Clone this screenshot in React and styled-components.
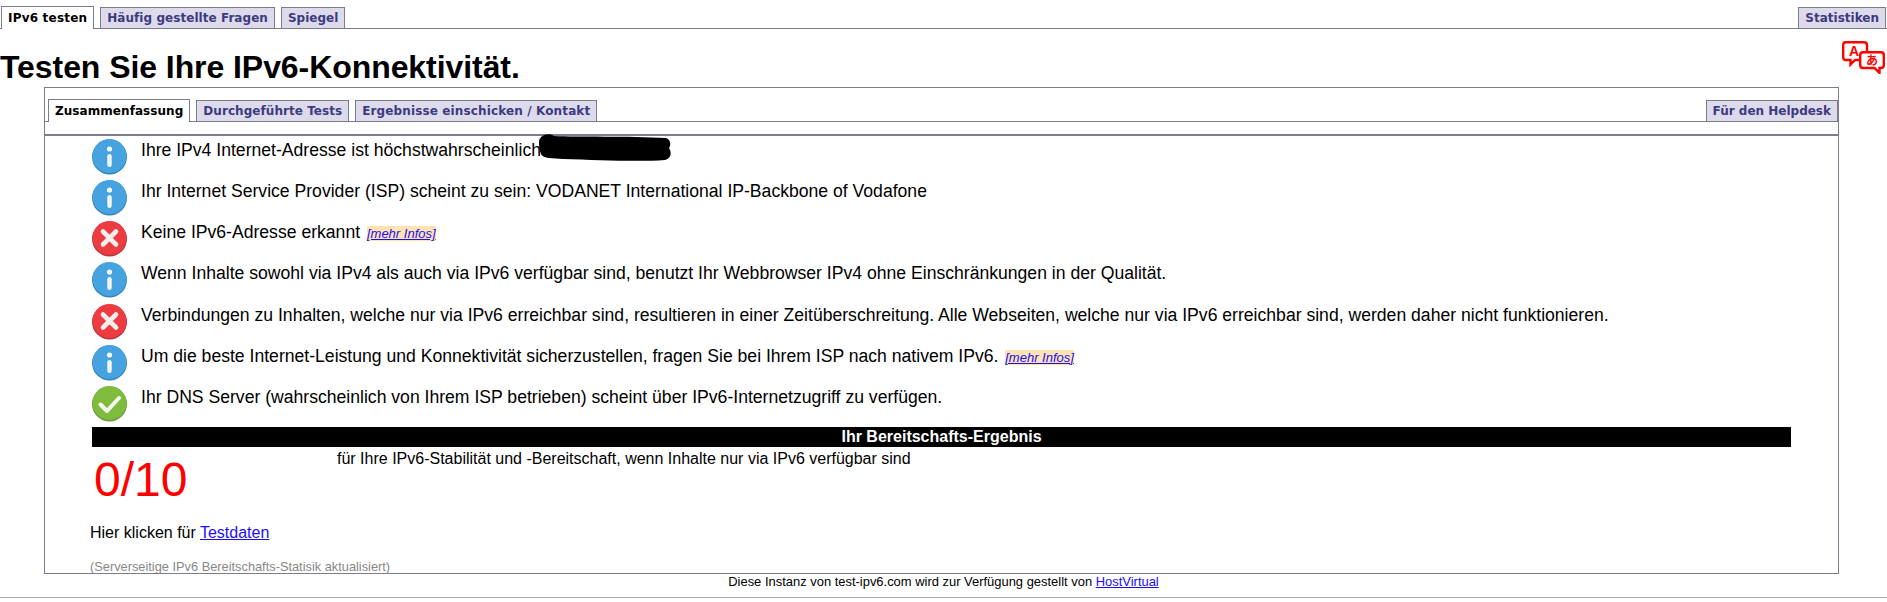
import React from "react";
import styled, { createGlobalStyle } from "styled-components";

const Global = createGlobalStyle`
  html, body { margin: 0; padding: 0; background: #fff; }
  body { font-family: "Liberation Sans", Arial, sans-serif; color: #000; font-size: 16px; }
`;
const Page = styled.div`width: 1887px; height: 602px; overflow: hidden; position: relative;`;
const TabBar = styled.div`
  display: flex; align-items: flex-end; gap: ${p => p.$gap || 6}px;
  height: ${p => p.$height}px; padding: 0 ${p => p.$padRight || 0}px 0 ${p => p.$padLeft || 0}px;
  border-bottom: 1px solid #7d7b8e; box-sizing: content-box;
`;
const Spacer = styled.div`flex: 1;`;
const Tab = styled.div`
  height: 21px; box-sizing: border-box; padding: 0 6px;
  display: flex; align-items: center;
  font: bold 12px "DejaVu Sans", Verdana, sans-serif;
  letter-spacing: ${p => p.$track || 0}px;
  border: 1px solid #7d7b8e;
  color: ${p => p.$active ? "#000" : "#3d3a80"};
  background: ${p => p.$active ? "#fff" : "#dddbeb"};
  ${p => p.$active ? "height: 23px; margin-bottom: -1px; border-bottom: 0; padding-bottom: 1px;" : "border-bottom: 0;"}
`;
const HeadRow = styled.div`position: relative; height: 58px;`;
const Title = styled.h1`
  margin: 0; padding-top: 22px; font: bold 32px/32px "Liberation Sans", Arial, sans-serif;
  letter-spacing: -0.07px; white-space: nowrap;
`;
const Lang = styled.svg`position: absolute; left: 1842px; top: 12px;`;
const Box = styled.div`
  margin-left: 44px; width: 1795px; height: 487px; box-sizing: border-box;
  border: 1px solid #7d7b8e;
`;
const Rule = styled.div`height: 12px; border-bottom: 2px solid #7d7b8e;`;
const Content = styled.div`padding: 3px 0 0 47px;`;
const Row = styled.div`display: flex; height: 41.17px; gap: 14px; align-items: flex-start;`;
const Msg = styled.div`font-size: 17.6px; line-height: 20px; padding-top: 1px; white-space: nowrap; position: relative;`;
const More = styled.a`
  font: italic 13px "Liberation Sans", Arial, sans-serif; color: #1a0dff; text-decoration: underline;
  background: #fde3b0; margin-left: 2px;
`;
const Scribble = styled.svg`position: absolute; left: 397px; top: -6px;`;
const Banner = styled.div`
  margin-top: 0; width: 1699px; height: 20px; background: #000; color: #fff;
  font: bold 16px/20px "Liberation Sans", Arial, sans-serif; text-align: center;
`;
const ScoreRow = styled.div`display: flex; height: 75px;`;
const Score = styled.div`width: 245px; padding: 5px 0 0 2px; box-sizing: border-box; font-size: 48px; line-height: 55px; color: #f00;`;
const ScoreNote = styled.div`font-size: 16px; line-height: 18px; padding-top: 3px;`;
const DataLine = styled.div`margin: 0 0 0 -2px; font-size: 16px; line-height: 18px; height: 34px; padding-top: 2px;`;
const Link = styled.a`color: #1a0dff; text-decoration: underline;`;
const Small = styled.div`margin-left: -2px; font-size: 12.8px; line-height: 14px; color: #888; padding-top: 2px;`;
const Footer = styled.div`
  height: 23px; border-bottom: 1px solid #aaa; text-align: center;
  font-size: 12.95px; line-height: 16px;
`;

const Icon = ({ kind }) => {
  const fill = { info: "#46a3e0", err: "#ec3c42", ok: "#7fbb3c" }[kind];
  const dark = { info: "#3585ba", err: "#b9353a", ok: "#69993a" }[kind];
  return (
    <svg width="35" height="36" viewBox="0 0 35 36" style={{ flex: "none" }}>
      <circle cx="17.5" cy="18" r="17.5" fill={dark} />
      <circle cx="17.5" cy="17" r="17" fill={fill} />
      {kind === "info" && <g fill="#f3f8fc"><circle cx="17.5" cy="10" r="2.6" /><rect x="15.3" y="15" width="4.4" height="13" rx="2.2" /></g>}
      {kind === "err" && <path d="M11 10.5 L24 23.5 M24 10.5 L11 23.5" stroke="#f8eeee" strokeWidth="4.6" strokeLinecap="round" />}
      {kind === "ok" && <path d="M8.5 18.5 L15 25 L27 12" fill="none" stroke="#f5f9ee" strokeWidth="4" strokeLinecap="round" strokeLinejoin="round" />}
    </svg>
  );
};

export default function App() {
  return (
    <Page>
      <Global />
      <TabBar $height={28} $padLeft={1} $padRight={1}>
        <Tab $active $track={0.2}>IPv6 testen</Tab>
        <Tab $track={0.05}>Häufig gestellte Fragen</Tab>
        <Tab>Spiegel</Tab>
        <Spacer />
        <Tab>Statistiken</Tab>
      </TabBar>
      <HeadRow>
        <Title>Testen Sie Ihre IPv6-Konnektivität.</Title>
        <Lang width="43" height="33" viewBox="0 0 43 33" fill="none">
          <path d="M3.5 1.2 H22 Q25 1.2 25 4 V16 Q25 19 22 19 H13 L8.5 23.5 V19 H3.5 Q1.2 19 1.2 16 V4 Q1.2 1.2 3.5 1.2 Z" fill="#fff" stroke="#f00" strokeWidth="2.4" />
          <text x="7" y="15" fontFamily="Liberation Sans" fontWeight="bold" fontSize="14" fill="#f00">A</text>
          <path d="M21 11.2 H39 Q41.8 11.2 41.8 14 V24 Q41.8 27 39 27 H37.5 V32 L32.5 27 H21 Q18.2 27 18.2 24 V14 Q18.2 11.2 21 11.2 Z" fill="#fff" stroke="#f00" strokeWidth="2.4" />
          <text x="24" y="24" fontFamily="Noto Sans CJK JP" fontWeight="bold" fontSize="12" fill="#f00">あ</text>
        </Lang>
      </HeadRow>
      <Box>
        <TabBar $height={33} $padLeft={3}>
          <Tab $active $track={0.06}>Zusammenfassung</Tab>
          <Tab $track={0.05}>Durchgeführte Tests</Tab>
          <Tab $track={0.13}>Ergebnisse einschicken / Kontakt</Tab>
          <Spacer />
          <Tab>Für den Helpdesk</Tab>
        </TabBar>
        <Rule />
        <Content>
          <Row><Icon kind="info" /><Msg>Ihre IPv4 Internet-Adresse ist höchstwahrscheinlich
            <Scribble width="134" height="29" viewBox="0 0 134 29"><path d="M1 9 C1 2 11 -1 16 3 C40 4 90 3 128 5 C133 7 133 12 131 15 C134 19 133 26 127 27 C100 29 60 27 25 26 C15 25 5 26 3 21 C1 17 1 13 1 9 Z" fill="#000" /></Scribble>
          </Msg></Row>
          <Row><Icon kind="info" /><Msg>Ihr Internet Service Provider (ISP) scheint zu sein: VODANET International IP-Backbone of Vodafone</Msg></Row>
          <Row><Icon kind="err" /><Msg>Keine IPv6-Adresse erkannt <More>[mehr Infos]</More></Msg></Row>
          <Row><Icon kind="info" /><Msg>Wenn Inhalte sowohl via IPv4 als auch via IPv6 verfügbar sind, benutzt Ihr Webbrowser IPv4 ohne Einschränkungen in der Qualität.</Msg></Row>
          <Row><Icon kind="err" /><Msg>Verbindungen zu Inhalten, welche nur via IPv6 erreichbar sind, resultieren in einer Zeitüberschreitung. Alle Webseiten, welche nur via IPv6 erreichbar sind, werden daher nicht funktionieren.</Msg></Row>
          <Row><Icon kind="info" /><Msg>Um die beste Internet-Leistung und Konnektivität sicherzustellen, fragen Sie bei Ihrem ISP nach nativem IPv6. <More>[mehr Infos]</More></Msg></Row>
          <Row><Icon kind="ok" /><Msg>Ihr DNS Server (wahrscheinlich von Ihrem ISP betrieben) scheint über IPv6-Internetzugriff zu verfügen.</Msg></Row>
          <Banner>Ihr Bereitschafts-Ergebnis</Banner>
          <ScoreRow>
            <Score>0/10</Score>
            <ScoreNote>für Ihre IPv6-Stabilität und -Bereitschaft, wenn Inhalte nur via IPv6 verfügbar sind</ScoreNote>
          </ScoreRow>
          <DataLine>Hier klicken für <Link>Testdaten</Link></DataLine>
          <Small>(Serverseitige IPv6 Bereitschafts-Statisik aktualisiert)</Small>
        </Content>
      </Box>
      <Footer>Diese Instanz von test-ipv6.com wird zur Verfügung gestellt von <Link>HostVirtual</Link></Footer>
    </Page>
  );
}
